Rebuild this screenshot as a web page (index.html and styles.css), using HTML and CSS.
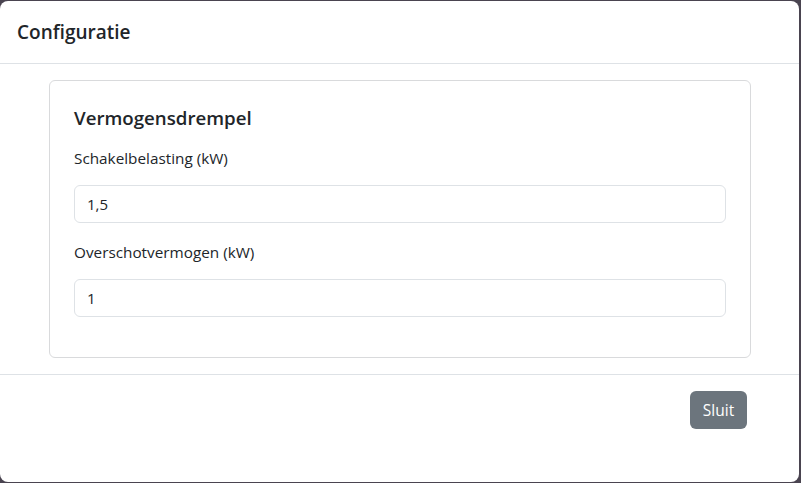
FILE: index.html
```html
<!DOCTYPE html>
<html lang="nl">
<head>
<meta charset="utf-8">
<title>Configuratie</title>
<link rel="stylesheet" href="styles.css">
</head>
<body>
<div class="modal">
  <div class="modal-header">
    <h5 class="modal-title">Configuratie</h5>
  </div>
  <div class="modal-body">
    <div class="card">
      <h5 class="card-title">Vermogensdrempel</h5>
      <label class="form-label" for="schakel">Schakelbelasting (kW)</label>
      <input class="form-control" id="schakel" type="text" value="1,5">
      <label class="form-label" for="overschot">Overschotvermogen (kW)</label>
      <input class="form-control last" id="overschot" type="text" value="1">
    </div>
  </div>
  <div class="modal-footer">
    <button class="btn" type="button">Sluit</button>
  </div>
</div>
</body>
</html>
```

FILE: styles.css
```css
html, body {
  margin: 0;
  padding: 0;
}
body {
  background: #4a4450;
  font-family: "Open Sans", "Noto Sans", sans-serif;
  color: #212529;
  width: 801px;
  height: 483px;
  overflow: hidden;
}
.modal {
  margin-top: 1px;
  width: 799px;
  height: 481px;
  background: #fff;
  border-radius: 8px;
  display: flex;
  flex-direction: column;
  box-sizing: border-box;
}
.modal-header {
  padding: 16px 17px;
  border-bottom: 1px solid #dee2e6;
}
.modal-title {
  margin: 0;
  font-size: 19px;
  font-weight: 600;
  line-height: 30px;
}
.modal-body {
  padding: 16px 48px 16px 49px;
}
.card {
  border: 1px solid #d9dadc;
  border-radius: 6px;
  padding: 25px 24px 24px;
  display: flex;
  flex-direction: column;
}
.card-title {
  margin: 0 0 16px;
  font-size: 18.7px;
  font-weight: 600;
  line-height: 24px;
}
.form-label {
  font-size: 15.3px;
  line-height: 24px;
  margin-bottom: 15px;
}
.form-control {
  font-family: inherit;
  font-size: 15px;
  color: #212529;
  height: 38px;
  box-sizing: border-box;
  border: 1px solid #dee2e6;
  border-radius: 6px;
  padding: 6px 12px;
  margin: 0 0 17px;
  outline: none;
}
.form-control.last {
  margin-bottom: 16px;
}
.modal-footer {
  flex: 1;
  border-top: 1px solid #dee2e6;
  padding: 16px 52px 16px 16px;
  display: flex;
  justify-content: flex-end;
  align-items: flex-start;
}
.btn {
  font-family: inherit;
  font-size: 15.5px;
  color: #fff;
  background: #6c757d;
  border: 0;
  border-radius: 6px;
  height: 38px;
  width: 57px;
  padding: 0;
}
```
